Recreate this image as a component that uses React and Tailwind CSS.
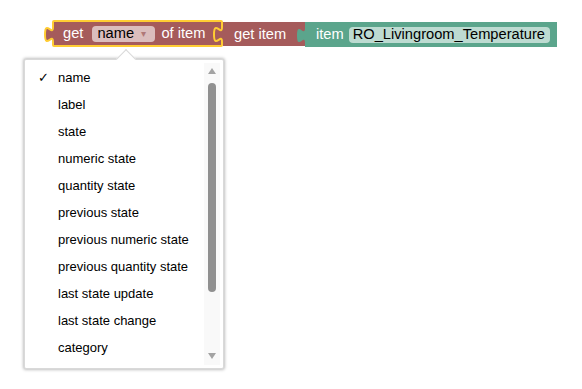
import React from "react";

const FONT = { fontFamily: '"Liberation Sans", Arial, sans-serif' };

const OPTIONS = [
  "name",
  "label",
  "state",
  "numeric state",
  "quantity state",
  "previous state",
  "previous numeric state",
  "previous quantity state",
  "last state update",
  "last state change",
  "category",
];

// Blockly-style puzzle tab, 8 wide and 15 tall
const TAB = "M8 0 c 0,10 -8,-8 -8,7.5 s 8,-2.5 8,7.5";

function Tab({ fill, stroke, className }) {
  return (
    <svg className={className} width="12" height="17" viewBox="-1 -1 12 17">
      <path d={TAB + " L11 15 L11 0 Z"} fill={fill} />
      {stroke && <path d={TAB} fill="none" stroke={stroke} strokeWidth="2" />}
    </svg>
  );
}

function OuterBlock() {
  return (
    <div className="relative flex h-[27px] w-[171px] items-center rounded-[2px] border-2 border-[#fc3] bg-[#a55b5b] pl-[9px] text-[14.67px] text-white">
      <Tab fill="#a55b5b" stroke="#fc3" className="absolute left-[-10px] top-[4px]" />
      <span className="leading-none">get</span>
      <div className="ml-[9px] flex h-[16px] w-[63px] items-center rounded-[4px] bg-[#dbbdbd] pl-[5px] text-black">
        <span className="leading-none">name</span>
        <span className="ml-[7px] text-[10px] leading-none text-[#b07878]">▾</span>
      </div>
      <span className="ml-[6px] leading-none">of item</span>
      <Tab fill="#a55b5b" stroke="#fc3" className="absolute left-[159px] top-[4px]" />
    </div>
  );
}

function GetItemBlock() {
  return (
    <div className="mt-[2px] flex h-[24px] w-[82px] items-center bg-[#a55b5b] pl-[11px] text-[14.67px] text-white">
      <span className="leading-none">get item</span>
    </div>
  );
}

function ItemBlock() {
  return (
    <div className="relative mt-[2px] flex h-[25px] w-[252px] items-center bg-[#5ba58c] pl-[11px] text-[14.67px] text-white">
      <Tab fill="#5ba58c" className="absolute left-[-9px] top-[5px]" />
      <span className="leading-none">item</span>
      <div className="ml-[5px] flex h-[16px] w-[201px] items-center rounded-[4px] bg-[#bddbd1] pl-[4px] text-black">
        <span className="leading-none">RO_Livingroom_Temperature</span>
      </div>
    </div>
  );
}

function Scrollbar() {
  return (
    <div className="mr-[3px] mt-[3px] mb-[3px] flex w-[16px] flex-col items-center bg-[#f9f9f9]">
      <svg className="mt-[5px]" width="8" height="6" viewBox="0 0 8 6">
        <path d="M0 6 L4 0 L8 6 Z" fill="#a3a3a3" />
      </svg>
      <div className="mt-[9px] h-[209px] w-[8px] rounded-full bg-[#909090]" />
      <svg className="mt-auto mb-[6px]" width="8" height="6" viewBox="0 0 8 6">
        <path d="M0 0 L8 0 L4 6 Z" fill="#a3a3a3" />
      </svg>
    </div>
  );
}

function DropdownMenu() {
  return (
    <>
      <div className="absolute left-[24px] top-[59px] flex h-[310px] w-[200px] overflow-hidden rounded-[2px] border border-[#d9d9d9] bg-white shadow-[0_0_3px_1px_rgba(0,0,0,0.25)]">
        <div className="flex-1 pt-[4px]">
          {OPTIONS.map((opt, i) => (
            <div key={opt} className="flex h-[27px] items-center pl-[13px] text-[13px] text-black">
              <span className="w-[20px] leading-none">{i === 0 ? "✓" : ""}</span>
              <span className="leading-none">{opt}</span>
            </div>
          ))}
        </div>
        <Scrollbar />
      </div>
      <div className="absolute left-[119px] top-[52px] h-[14px] w-[14px] rotate-45 border-l border-t border-[#d9d9d9] bg-white" />
    </>
  );
}

export default function App() {
  return (
    <div className="relative h-[389px] w-[582px] overflow-hidden bg-white" style={FONT}>
      <div className="flex items-start pl-[52px] pt-[20px]">
        <OuterBlock />
        <GetItemBlock />
        <ItemBlock />
      </div>
      <DropdownMenu />
    </div>
  );
}
